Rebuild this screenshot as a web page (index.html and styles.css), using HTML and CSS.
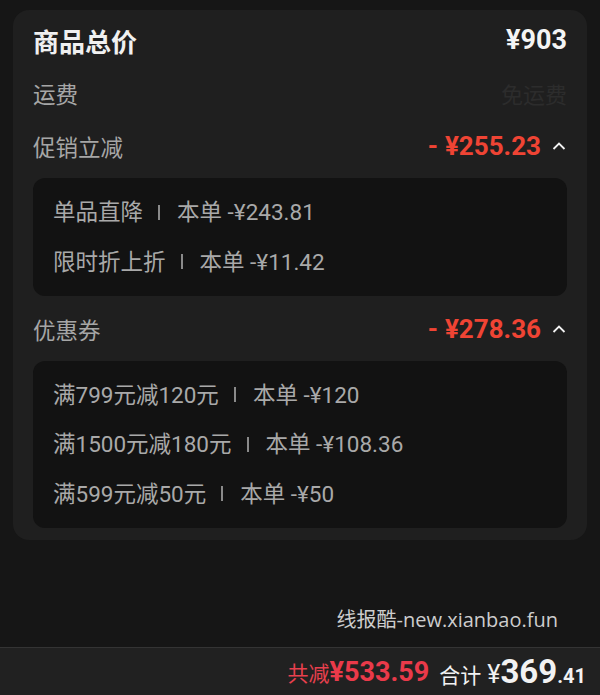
FILE: index.html
```html
<!DOCTYPE html>
<html>
<head>
  <meta charset="UTF-8">
  <meta name="viewport" content="width=device-width, initial-scale=1">
  <title>订单金额明细</title>
  <link rel="stylesheet" href="styles.css">
</head>
<body>
  <div class="page">
    <div class="card">
      <div class="row title-row">
        <span class="title">商品总价</span>
        <span class="total">¥903</span>
      </div>

      <div class="row">
        <span class="label">运费</span>
        <span class="free">免运费</span>
      </div>

      <div class="row">
        <span class="label">促销立减</span>
        <span class="discount">
          <span class="minus">-</span>¥255.23
          <svg class="caret" width="14" height="10" viewBox="0 0 14 10"><path d="M1.5 8 L7 2.5 L12.5 8" fill="none" stroke="#f2f2f2" stroke-width="1.8"/></svg>
        </span>
      </div>

      <div class="detail">
        <div class="item">单品直降<span class="sep"></span>本单 -¥243.81</div>
        <div class="item">限时折上折<span class="sep"></span>本单 -¥11.42</div>
      </div>

      <div class="row coupon-row">
        <span class="label">优惠券</span>
        <span class="discount">
          <span class="minus">-</span>¥278.36
          <svg class="caret" width="14" height="10" viewBox="0 0 14 10"><path d="M1.5 8 L7 2.5 L12.5 8" fill="none" stroke="#f2f2f2" stroke-width="1.8"/></svg>
        </span>
      </div>

      <div class="detail">
        <div class="item">满799元减120元<span class="sep"></span>本单 -¥120</div>
        <div class="item">满1500元减180元<span class="sep"></span>本单 -¥108.36</div>
        <div class="item">满599元减50元<span class="sep"></span>本单 -¥50</div>
      </div>
    </div>

    <div class="watermark">线报酷-new.xianbao.fun</div>
  </div>

  <div class="bar">
    <span class="saved">共减<b>¥533.59</b></span>
    <span class="sum">合计 <span class="yen">¥</span><b class="big">369</b><b class="cents">.41</b></span>
  </div>
</body>
</html>
```

FILE: styles.css
```css
html, body {
  margin: 0;
  height: 100%;
}
body {
  background: #161616;
  font-family: Roboto, "Noto Sans CJK SC", sans-serif;
  color: #a6a6a6;
  display: flex;
  flex-direction: column;
  overflow: hidden;
}
.page {
  flex: 1;
  padding: 10px 13px 0;
  display: flex;
  flex-direction: column;
}
.card {
  background: #1f1f1f;
  border-radius: 16px;
  padding: 12px 20px 12px;
}
.row {
  display: flex;
  justify-content: space-between;
  align-items: center;
  height: 36px;
  margin-top: 17px;
}
.title-row {
  margin-top: 0;
}
.title {
  font-size: 26px;
  font-weight: 700;
  color: #f0f0f0;
}
.total {
  font-size: 27px;
  font-weight: 700;
  color: #f4f4f4;
}
.label {
  font-size: 22.5px;
}
.free {
  font-size: 22px;
  color: #2c2c2c;
}
.discount {
  display: flex;
  align-items: center;
  font-size: 26px;
  font-weight: 700;
  color: #ef4434;
}
.minus {
  margin-right: 7px;
}
.caret {
  margin-left: 11px;
  margin-right: 1px;
}
.detail {
  background: #121212;
  border-radius: 12px;
  padding: 18px 20px;
  margin-top: 14px;
  display: flex;
  flex-direction: column;
  gap: 17.5px;
}
.coupon-row {
  margin-top: 15px;
}
.item {
  font-size: 22.5px;
  line-height: 32px;
  color: #a9a9a9;
  display: flex;
  align-items: center;
}
.sep {
  width: 2px;
  height: 15px;
  background: #8a8a8a;
  margin: 0 17px 0 15px;
}
.watermark {
  margin-top: auto;
  margin-bottom: 14px;
  align-self: flex-end;
  margin-right: 29px;
  font-family: "Open Sans", "Noto Sans CJK SC", sans-serif;
  font-size: 20px;
  color: #cdcdcd;
}
.bar {
  height: 47px;
  background: #212121;
  border-top: 1px solid #343434;
  display: flex;
  justify-content: flex-end;
  align-items: center;
  padding: 0 14px;
}
.saved {
  font-size: 21px;
  color: #e8404e;
}
.saved b {
  font-size: 27px;
  color: #ea3a4a;
}
.sum {
  margin-left: 10px;
  font-size: 21px;
  color: #f2f2f2;
  display: flex;
  align-items: baseline;
}
.yen {
  margin-left: 6px;
  font-size: 25px;
}
.big {
  font-size: 33px;
}
.cents {
  font-size: 20px;
}
```
